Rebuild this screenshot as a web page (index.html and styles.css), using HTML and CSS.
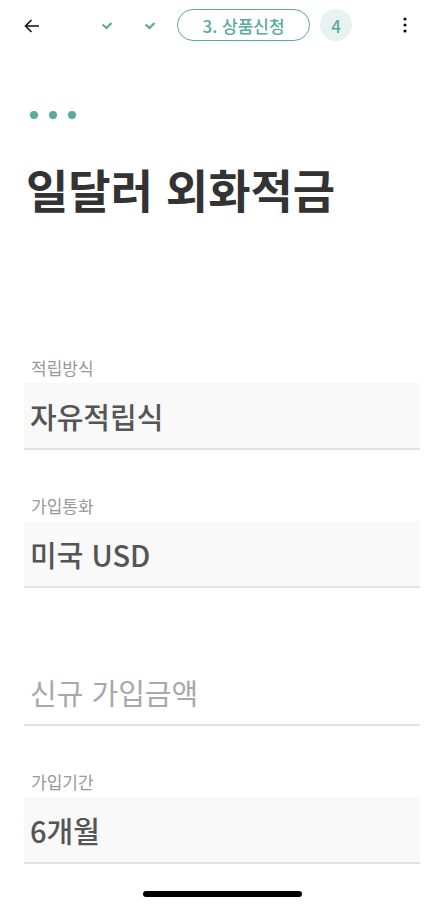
FILE: index.html
```html
<!DOCTYPE html>
<html lang="ko">
<head>
<meta charset="UTF-8">
<meta name="viewport" content="width=device-width, initial-scale=1.0">
<title>일달러 외화적금</title>
<link rel="stylesheet" href="styles.css">
</head>
<body>

<header class="topbar">
  <button class="icon-btn back" aria-label="뒤로">
    <svg width="16" height="14" viewBox="0 0 16 14"><path d="M15 7H1.5M7.5 1L1.5 7l6 6" fill="none" stroke="#111" stroke-width="1.6"/></svg>
  </button>
  <div class="steps">
    <span class="step-done first">
      <svg width="12" height="9" viewBox="0 0 12 9"><path d="M1.5 3.5l4 3.5 5-5" fill="none" stroke="#5aaa9e" stroke-width="2.2"/></svg>
    </span>
    <span class="step-done">
      <svg width="12" height="9" viewBox="0 0 12 9"><path d="M1.5 3.5l4 3.5 5-5" fill="none" stroke="#5aaa9e" stroke-width="2.2"/></svg>
    </span>
    <span class="step-current">3. 상품신청</span>
    <span class="step-next">4</span>
  </div>
  <button class="icon-btn more" aria-label="더보기">
    <svg width="4" height="16" viewBox="0 0 4 16"><circle cx="2" cy="2" r="1.6" fill="#111"/><circle cx="2" cy="8" r="1.6" fill="#111"/><circle cx="2" cy="14" r="1.6" fill="#111"/></svg>
  </button>
</header>

<main class="content">
  <div class="dots"><i></i><i></i><i></i></div>
  <h1 class="title">일달러 외화적금</h1>

  <div class="field">
    <div class="field-label">적립방식</div>
    <div class="field-box">자유적립식</div>
  </div>

  <div class="field">
    <div class="field-label">가입통화</div>
    <div class="field-box">미국 USD</div>
  </div>

  <div class="field">
    <div class="field-label"></div>
    <div class="field-box empty">신규 가입금액</div>
  </div>

  <div class="field">
    <div class="field-label">가입기간</div>
    <div class="field-box">6개월</div>
  </div>
</main>

<div class="home-bar"></div>

</body>
</html>
```

FILE: styles.css
```css
body {
  margin: 0;
  background-color: #fff;
  font-family: "Noto Sans CJK KR", "Noto Sans", sans-serif;
  color: #333;
}
.topbar {
  display: flex;
  align-items: center;
  height: 50px;
  padding: 0 24px;
}
.icon-btn {
  background: none;
  border: none;
  padding: 0;
  display: flex;
  align-items: center;
}
.back {
  margin-top: 2px;
}
.steps {
  display: flex;
  align-items: center;
  flex: 1;
}
.step-done {
  display: flex;
  width: 12px;
  margin-right: 31px;
}
.step-done.first {
  margin-left: 61px;
}
.step-done + .step-done {
  margin-right: 21px;
}
.step-current {
  box-sizing: border-box;
  width: 133px;
  height: 32px;
  border: 1.5px solid #5aaa9e;
  border-radius: 16px;
  color: #5aaa9e;
  font-size: 17px;
  font-weight: 500;
  display: flex;
  justify-content: center;
  align-items: center;
}
.step-next {
  width: 32px;
  height: 32px;
  margin-left: 10px;
  border-radius: 50%;
  background-color: #e8f3f1;
  color: #5aaa9e;
  font-size: 17px;
  font-weight: 500;
  display: flex;
  justify-content: center;
  align-items: center;
}
.more {
  margin-right: 13px;
}
.content {
  padding: 0 24px;
}
.dots {
  display: flex;
  gap: 11px;
  padding: 61px 0 0 6px;
}
.dots i {
  width: 8px;
  height: 8px;
  border-radius: 50%;
  background-color: #5aaa9e;
}
.title {
  margin: 39px 0 0 2px;
  font-size: 46px;
  font-weight: 700;
  line-height: 60px;
  color: #333;
}
.field {
  margin-top: 45px;
}
.title + .field {
  margin-top: 139px;
}
.field-label {
  height: 22px;
  line-height: 22px;
  padding-left: 7px;
  font-size: 17px;
  color: #999;
  margin-bottom: 4px;
}
.field-box {
  box-sizing: border-box;
  height: 67px;
  display: flex;
  align-items: center;
  padding-left: 6px;
  background-color: #f9f9f9;
  border-bottom: 2px solid #e2e2e2;
  font-size: 29px;
  font-weight: 500;
  color: #555;
}
.field-box.empty {
  background-color: #fff;
  font-weight: 400;
  color: #a8a8a8;
}
.home-bar {
  position: fixed;
  left: 143px;
  bottom: 9px;
  width: 159px;
  height: 6px;
  border-radius: 3px;
  background-color: #000;
}
```
